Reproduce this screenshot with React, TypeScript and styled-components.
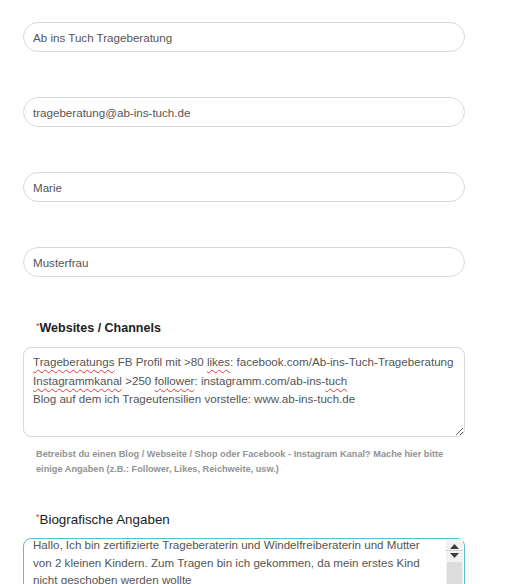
import React, { useEffect, useRef } from 'react';
import styled, { createGlobalStyle } from 'styled-components';

const GlobalStyle = createGlobalStyle`
  body {
    margin: 0;
    background: #fff;
    font-family: "Liberation Sans", Arial, sans-serif;
  }
`;

const Form = styled.form`
  width: 442px;
  padding: 22px 0 0 23px;
  display: flex;
  flex-direction: column;
`;

const TextInput = styled.input`
  box-sizing: border-box;
  width: 100%;
  height: 30px;
  margin: 0 0 45px;
  padding: 0 9px;
  border: 1px solid #d9d9d9;
  border-radius: 15px;
  font-family: inherit;
  font-size: 11.6px;
  color: #555;
  background: #fff;
  outline: none;
`;

const Field = styled.div<{ $top: number }>`
  display: flex;
  flex-direction: column;
  margin-top: ${(p) => p.$top}px;
`;

const Label = styled.label<{ $bold?: boolean }>`
  display: block;
  padding-left: 13px;
  margin-bottom: ${(p) => (p.$bold ? 11 : 10)}px;
  font-size: ${(p) => (p.$bold ? '12.5px' : '13.4px')};
  font-weight: ${(p) => (p.$bold ? 700 : 400)};
  line-height: ${(p) => (p.$bold ? 16 : 17)}px;
  color: #222;
`;

const Required = styled.span`
  color: #e2322d;
  font-size: 9px;
  font-weight: 400;
  vertical-align: top;
  line-height: 12px;
`;

const TextBox = styled.div`
  box-sizing: border-box;
  width: 100%;
  height: 90px;
  padding: 5px 9px;
  border: 1px solid #d9d9d9;
  border-radius: 8px;
  font-size: 11.6px;
  line-height: 18.5px;
  color: #555;
  white-space: pre-wrap;
  overflow: auto;
  resize: vertical;
`;

const Misspelled = styled.span`
  text-decoration: underline wavy #e53935;
  text-decoration-thickness: 1px;
  text-underline-offset: 3px;
`;

const Hint = styled.p`
  margin: 10px 0 0;
  padding: 0 8px 0 13px;
  font-size: 9.2px;
  font-weight: 700;
  line-height: 15px;
  color: #939393;
`;

const BioWrap = styled.div`
  position: relative;
`;

const Bio = styled.textarea`
  display: block;
  box-sizing: border-box;
  width: 100%;
  height: 56px;
  padding: 4px 24px 4px 9px;
  border: 1px solid #5bbcd8;
  border-radius: 8px;
  font-family: inherit;
  font-size: 11.6px;
  line-height: 17.5px;
  color: #555;
  outline: none;
  overflow: hidden;
  resize: none;
`;

/* classic scrollbar drawn over the right edge of the focused textarea */
const ScrollRail = styled.div`
  position: absolute;
  top: 1px;
  right: 2px;
  bottom: 0;
  width: 17px;
  display: flex;
  flex-direction: column;
  align-items: stretch;
  background: #f2f2f2;
  pointer-events: none;
`;

const ArrowButton = styled.div<{ $divider?: boolean }>`
  height: 6px;
  display: flex;
  align-items: center;
  justify-content: center;
  margin-top: ${(p) => (p.$divider ? 4 : 0)}px;
  padding-bottom: ${(p) => (p.$divider ? 1 : 0)}px;
  border-bottom: ${(p) => (p.$divider ? '1px solid #d0d0d0' : 'none')};
  margin-bottom: ${(p) => (p.$divider ? 1 : 4)}px;
`;

const Thumb = styled.div`
  flex: 1;
  margin: 0 1px;
  background: #dcdcdc;
  position: relative;
`;

const Grip = styled.svg`
  position: absolute;
  right: 1px;
  bottom: 2px;
`;

const Arrow = ({ down }: { down?: boolean }) => (
  <svg width="9" height="5" viewBox="0 0 9 5">
    <polygon points={down ? '0,0 9,0 4.5,5' : '0,5 9,5 4.5,0'} fill="#3c3c3c" />
  </svg>
);

const bioText =
  'Hallo, Ich bin zertifizierte Trageberaterin und Windelfreiberaterin und Mutter von 2 kleinen Kindern. Zum Tragen bin ich gekommen, da mein erstes Kind nicht geschoben werden wollte';

export default function App() {
  const bioRef = useRef<HTMLTextAreaElement>(null);

  useEffect(() => {
    if (bioRef.current) bioRef.current.scrollTop = 8;
  }, []);

  return (
    <>
      <GlobalStyle />
      <Form>
        <TextInput defaultValue="Ab ins Tuch Trageberatung" />
        <TextInput defaultValue="trageberatung@ab-ins-tuch.de" />
        <TextInput defaultValue="Marie" />
        <TextInput defaultValue="Musterfrau" />

        <Field $top={-2}>
          <Label $bold>
            <Required>*</Required>Websites / Channels
          </Label>
          <TextBox role="textbox" aria-multiline="true">
            <Misspelled>Trageberatungs</Misspelled> FB Profil mit &gt;80 <Misspelled>likes</Misspelled>:
            facebook.com/Ab-ins-Tuch-Trageberatung{'\n'}
            <Misspelled>Instagrammkanal</Misspelled> &gt;250 <Misspelled>follower</Misspelled>:
            instagramm.com/ab-ins-<Misspelled>tuch</Misspelled>
            {'\n'}Blog auf dem ich Trageutensilien vorstelle: www.ab-ins-tuch.de
          </TextBox>
          <Hint>
            Betreibst du einen Blog / Webseite / Shop oder Facebook - Instagram Kanal? Mache hier bitte
            einige Angaben (z.B.: Follower, Likes, Reichweite, usw.)
          </Hint>
        </Field>

        <Field $top={34}>
          <Label>
            <Required>*</Required>Biografische Angaben
          </Label>
          <BioWrap>
            <Bio ref={bioRef} defaultValue={bioText} />
            <ScrollRail aria-hidden="true">
              <ArrowButton $divider>
                <Arrow />
              </ArrowButton>
              <ArrowButton>
                <Arrow down />
              </ArrowButton>
              <Thumb>
                <Grip width="10" height="10" viewBox="0 0 10 10">
                  <path d="M9 2 L2 9 M9 5 L5 9" stroke="#777" strokeWidth="1" strokeDasharray="1 1" />
                </Grip>
              </Thumb>
            </ScrollRail>
          </BioWrap>
        </Field>
      </Form>
    </>
  );
}
